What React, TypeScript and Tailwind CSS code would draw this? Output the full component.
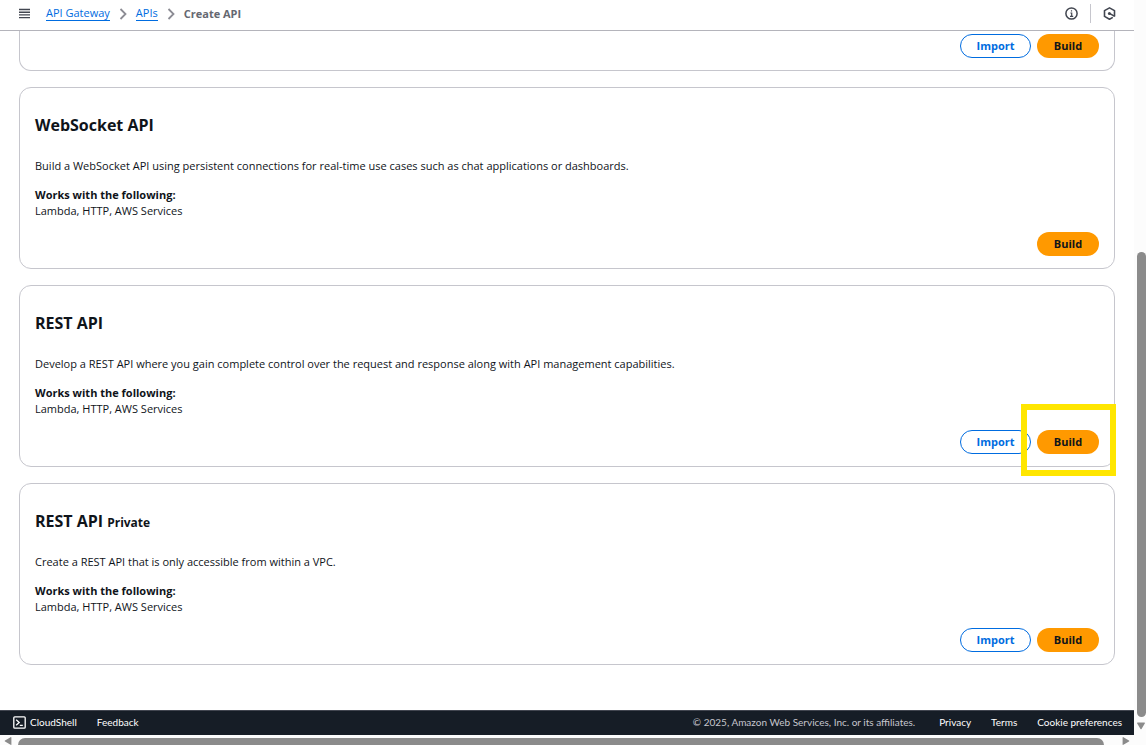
import { ReactNode } from 'react'
import { clsx } from 'clsx'

interface ApiType {
  title: string
  tag?: string
  description: string
  canImport: boolean
  highlighted?: boolean
}

const apiTypes: ApiType[] = [
  {
    title: 'WebSocket API',
    description:
      'Build a WebSocket API using persistent connections for real-time use cases such as chat applications or dashboards.',
    canImport: false,
  },
  {
    title: 'REST API',
    description:
      'Develop a REST API where you gain complete control over the request and response along with API management capabilities.',
    canImport: true,
    highlighted: true,
  },
  {
    title: 'REST API',
    tag: 'Private',
    description: 'Create a REST API that is only accessible from within a VPC.',
    canImport: true,
  },
]

function Chevron() {
  return (
    <svg width="8" height="12" viewBox="0 0 8 12" fill="none" stroke="#8c8c94" strokeWidth="1.8" aria-hidden="true">
      <path d="M1.5 1l5 5-5 5" />
    </svg>
  )
}

function CardActions({ canImport, highlighted }: { canImport: boolean; highlighted?: boolean }) {
  return (
    <div className="flex justify-end gap-[6px]">
      {canImport && (
        <button
          type="button"
          className="h-6 w-[71px] rounded-full border border-[#006ce0] bg-white text-[11px] leading-4 font-bold text-[#006ce0]"
        >
          Import
        </button>
      )}
      <div className="relative flex">
        <button type="button" className="h-6 w-[62px] rounded-full bg-[#ff9900] text-[11px] leading-4 font-bold text-[#0f141a]">
          Build
        </button>
        {highlighted && (
          <div className="pointer-events-none absolute -top-[26px] -right-[17px] -bottom-[22px] -left-4 border-6 border-[#ffe600]" />
        )}
      </div>
    </div>
  )
}

function ApiCard({ api }: { api: ApiType }) {
  return (
    <section className="rounded-xl border border-[#c6c6cd] bg-white px-[15px] pt-[27px] pb-3">
      <h2 className="flex items-baseline gap-1 text-[16px] leading-5 font-bold">
        {api.title}
        {api.tag && <small className="text-[12px] leading-4">{api.tag}</small>}
      </h2>
      <p className="mt-[23px]">{api.description}</p>
      <p className="mt-[13px] font-bold">Works with the following:</p>
      <p className="mb-[13px]">Lambda, HTTP, AWS Services</p>
      <CardActions canImport={api.canImport} highlighted={api.highlighted} />
    </section>
  )
}

function CrumbLink({ children }: { children: ReactNode }) {
  return (
    <a href="#" className="border-b border-[#006ce0] leading-[14px] text-[#006ce0]">
      {children}
    </a>
  )
}

function TopBar() {
  return (
    <header className="flex h-[31px] shrink-0 items-center border-b border-[#b4b4bb] pr-[18px] pb-[3px] pl-[19px]">
      <button type="button" aria-label="Open navigation" className="mr-4">
        <svg width="11" height="11" viewBox="0 0 11 11" stroke="#424650" strokeWidth="1.4">
          <path d="M0 1.5h11M0 4.2h11M0 6.9h11M0 9.6h11" />
        </svg>
      </button>
      <nav aria-label="Breadcrumbs" className="flex items-center gap-[9px]">
        <CrumbLink>API Gateway</CrumbLink>
        <Chevron />
        <CrumbLink>APIs</CrumbLink>
        <Chevron />
        <span className="font-bold text-[#656871]">Create API</span>
      </nav>
      <div className="ml-auto flex items-center gap-3">
        <button type="button" aria-label="Info">
          <svg width="13" height="13" viewBox="0 0 13 13" fill="none" stroke="#424650" strokeWidth="1.5">
            <circle cx="6.5" cy="6.5" r="5.6" />
            <path d="M5.4 6h1.3v3.5M5 9.4h3.2M6.5 3.2v1.4" strokeWidth="1.2" />
          </svg>
        </button>
        <span className="h-[19px] w-px bg-[#c6c6cd]" />
        <button type="button" aria-label="Amazon Q">
          <svg width="13" height="13" viewBox="0 0 13 13" fill="none" stroke="#424650" strokeWidth="1.6">
            <path d="M9.8 10.4L6.5 12.2 1.5 9.4V3.6L6.5.9l5 2.7v5.8" strokeLinejoin="round" />
            <path d="M6.5 6.4l5.2 3" />
            <circle cx="6.4" cy="6.4" r="1.5" fill="#424650" stroke="none" />
          </svg>
        </button>
      </div>
    </header>
  )
}

function Footer() {
  return (
    <footer className="flex h-[25px] shrink-0 items-center border-t border-[#424650] bg-[#161d26] pr-3 pb-[3px] pl-[13px] font-['Lato',sans-serif] text-[10px] leading-4 text-white">
      <a href="#" className="flex items-center gap-1">
        <svg width="13" height="13" viewBox="0 0 13 13" fill="none" stroke="currentColor" strokeWidth="1.3" className="mt-0.5">
          <rect x=".8" y=".8" width="11.4" height="11.4" rx="1" />
          <path d="M3.2 3.8l3 2.7-3 2.7M6.8 9.4h3" />
        </svg>
        CloudShell
      </a>
      <a href="#" className="ml-5">
        Feedback
      </a>
      <span className="ml-auto text-[#c6c6cd]">© 2025, Amazon Web Services, Inc. or its affiliates.</span>
      <a href="#" className="ml-6">
        Privacy
      </a>
      <a href="#" className="ml-5">
        Terms
      </a>
      <a href="#" className="ml-5">
        Cookie preferences
      </a>
    </footer>
  )
}

function ScrollArrow({ direction }: { direction: 'left' | 'right' | 'down' }) {
  return (
    <svg
      width="8"
      height="8"
      viewBox="0 0 8 8"
      fill="#8b8b8b"
      aria-hidden="true"
      className={clsx('shrink-0', direction === 'left' && 'rotate-90', direction === 'right' && '-rotate-90')}
    >
      <path d="M.6.6h6.8c.5 0 .7.5.4.8L4.5 7c-.3.4-.7.4-1 0L.2 1.4C-.1 1.1.1.6.6.6z" />
    </svg>
  )
}

export default function App() {
  return (
    <div className="flex h-screen flex-col overflow-hidden bg-white font-['Open_Sans',sans-serif] text-[11px] leading-4 text-[#0f141a]">
      <div className="flex min-h-0 flex-1">
        <div className="flex min-w-0 flex-1 flex-col">
          <TopBar />
          <main className="flex flex-1 flex-col gap-4 overflow-hidden px-[19px]">
            <section className="rounded-b-xl border border-t-0 border-[#c6c6cd] px-[15px] pt-[3px] pb-3">
              <CardActions canImport />
            </section>
            {apiTypes.map((api) => (
              <ApiCard key={api.description} api={api} />
            ))}
          </main>
          <Footer />
        </div>
        <div className="flex w-3 shrink-0 flex-col items-end bg-[#fcfcfc]">
          <div className="grow-[252]" />
          <div className="w-[9px] grow-[465] rounded-full bg-[#8b8b8b]" />
          <div className="flex h-[18px] items-center pr-px">
            <ScrollArrow direction="down" />
          </div>
        </div>
      </div>
      <div className="flex h-[10px] shrink-0 items-end bg-[#fcfcfc] pr-4 pl-1">
        <ScrollArrow direction="left" />
        <div className="mr-[18px] ml-[6px] h-[7px] flex-1 rounded-t-full bg-[#8b8b8b]" />
        <ScrollArrow direction="right" />
      </div>
    </div>
  )
}
